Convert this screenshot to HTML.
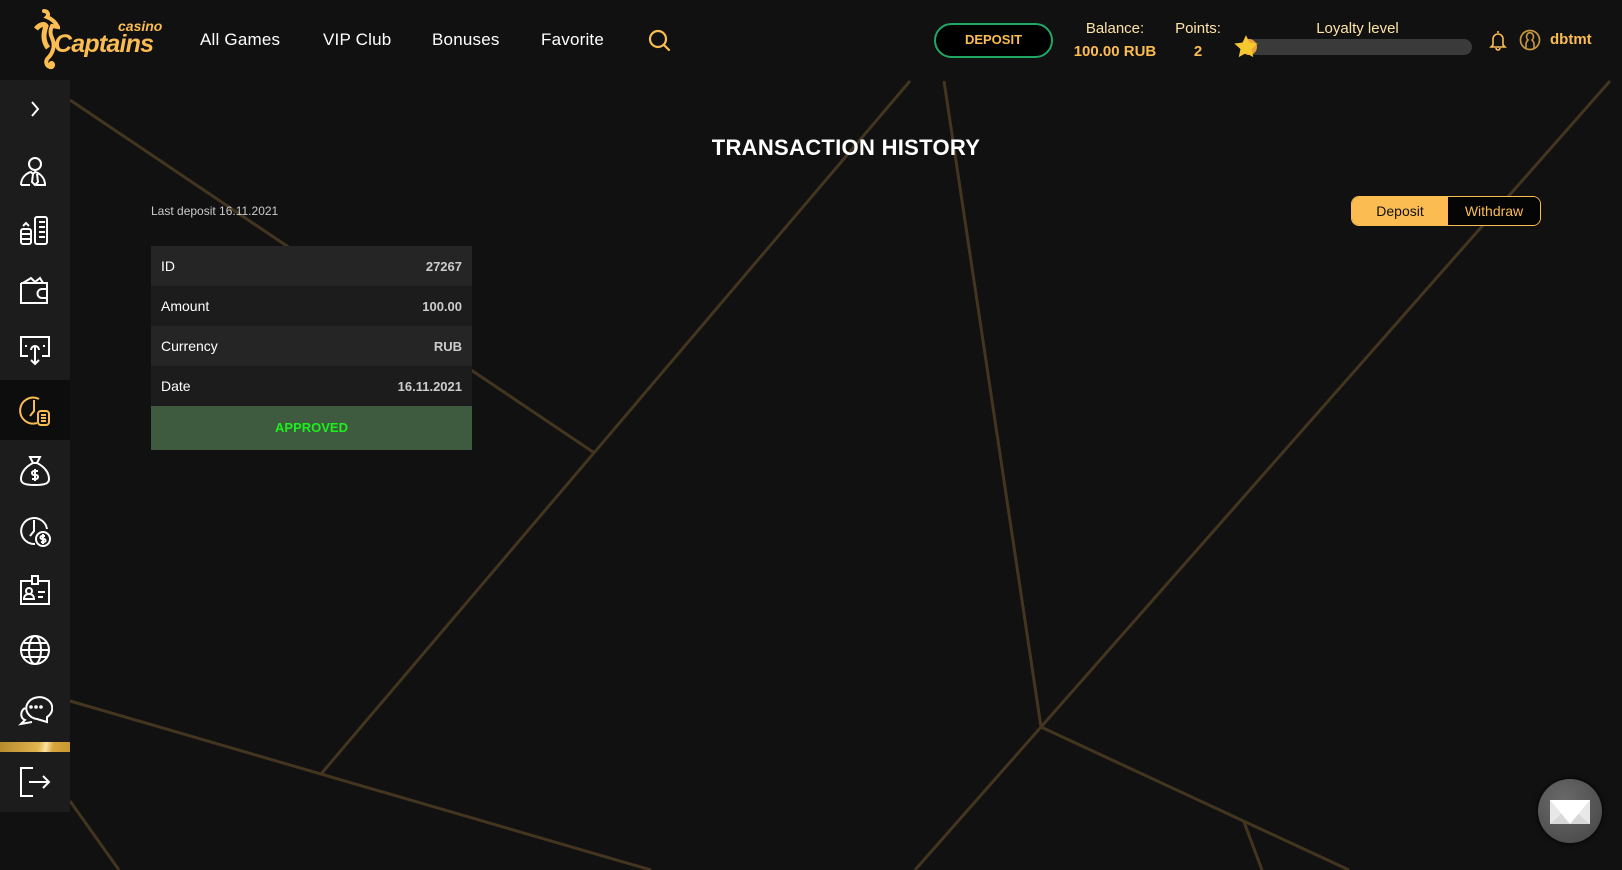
<!DOCTYPE html>
<html><head><meta charset="utf-8"><style>
*{margin:0;padding:0;box-sizing:border-box}
body{width:1622px;height:870px;background:#111;overflow:hidden;position:relative;font-family:"Liberation Sans",sans-serif;color:#fff}
.abs{position:absolute}
#bg{position:absolute;left:0;top:0}
.nav{position:absolute;top:30px;font-size:17px;color:#fff;letter-spacing:0.2px}
.gold{color:#fbbd52}
.side{position:absolute;left:0;top:80px;width:70px;height:732px;background:#1c1c1c}
.ico{position:absolute;left:17px;width:36px;height:36px}
</style></head><body>
<svg id="bg" width="1622" height="870">
<g stroke="#43351f" stroke-width="3" fill="none">
<line x1="70" y1="100" x2="593" y2="452"/>
<line x1="910" y1="81" x2="321" y2="774"/>
<line x1="70" y1="701" x2="651" y2="870"/>
<line x1="70" y1="801" x2="119" y2="870"/>
<line x1="944" y1="81" x2="1041" y2="727"/>
<polyline points="1610,81 1041,727 915,870"/>
<line x1="1041" y1="727" x2="1349" y2="870"/>
<line x1="1244" y1="822" x2="1262" y2="870"/>
</g></svg>

<div class="abs" style="left:0;top:0;width:1622px;height:80px;background:#111"></div>
<svg class="abs" style="left:30px;top:9px" width="30" height="64" viewBox="0 0 30 64">
<path d="M14 2c4 0 5 4 3 6c5 2 9 6 11 10l-6 -1c-2 4 -2 8 0 12c3 6 2 14 -4 20c-3 3 -2 8 2 9c3 1 4 -3 2 -4c-2 0 -2 2 -1 2" stroke="#fbbd52" stroke-width="4" fill="none" stroke-linecap="round"/>
<path d="M6 20c3 -4 8 -6 10 -3c-2 6 -4 14 2 22" stroke="#fbbd52" stroke-width="5" fill="none"/>
</svg>
<div class="abs gold" style="left:118px;top:18px;font-size:14px;font-style:italic;font-weight:bold">casino</div>
<div class="abs gold" style="left:54px;top:30px;font-size:25px;font-style:italic;font-weight:bold;letter-spacing:-0.8px">Captains</div>
<div class="nav" style="left:200px">All Games</div>
<div class="nav" style="left:323px">VIP Club</div>
<div class="nav" style="left:432px">Bonuses</div>
<div class="nav" style="left:541px">Favorite</div>
<svg class="abs" style="left:648px;top:29px" width="24" height="24"><circle cx="10" cy="10" r="8" stroke="#fbbd52" stroke-width="2.2" fill="none"/><line x1="16" y1="16" x2="21" y2="21" stroke="#fbbd52" stroke-width="2.2" stroke-linecap="round"/></svg>

<div class="abs" style="left:934px;top:23px;width:119px;height:35px;border:2.5px solid #21a764;border-radius:18px;background:#000;color:#fbbd52;font-weight:bold;font-size:13px;text-align:center;line-height:30px">DEPOSIT</div>
<div class="abs" style="left:1060px;top:20px;width:110px;text-align:center;font-size:15px;color:#fde3a8">Balance:</div>
<div class="abs gold" style="left:1060px;top:43px;width:110px;text-align:center;font-size:15px;font-weight:bold">100.00 RUB</div>
<div class="abs" style="left:1168px;top:20px;width:60px;text-align:center;font-size:15px;color:#fde3a8">Points:</div>
<div class="abs gold" style="left:1168px;top:43px;width:60px;text-align:center;font-size:15px;font-weight:bold">2</div>
<div class="abs" style="left:1280px;top:20px;width:155px;text-align:center;font-size:15px;color:#fde3a8">Loyalty level</div>
<div class="abs" style="left:1241px;top:39px;width:231px;height:16px;border-radius:8px;background:#3a3a3a"></div>
<div class="abs" style="left:1241px;top:39px;width:16px;height:16px;border-radius:8px;background:#e8a23a"></div>
<svg class="abs" style="left:1233px;top:34px" width="26" height="26" viewBox="0 0 24 24"><path d="M12 1l3.2 7 7.6.8-5.7 5.1 1.6 7.5L12 17.6 5.3 21.4l1.6-7.5L1.2 8.8l7.6-.8z" fill="#f7c82e"/></svg>
<svg class="abs" style="left:1488px;top:29px" width="20" height="22" viewBox="0 0 20 22"><path d="M10 2v2M5 16V10a5 5 0 0 1 10 0v6l2 2H3z M8 19a2 2 0 0 0 4 0" stroke="#fbbd52" stroke-width="1.6" fill="none"/></svg>
<svg class="abs" style="left:1519px;top:29px" width="22" height="22" viewBox="0 0 22 22"><circle cx="11" cy="11" r="9.5" stroke="#c9953f" stroke-width="1.7" fill="none"/><path d="M7 19v-4c0-2 1-3 2-4a3.5 4 0 1 1 4 0c1 1 2 2 2 4v4" stroke="#c9953f" stroke-width="1.6" fill="none"/></svg>
<div class="abs gold" style="left:1550px;top:31px;font-size:15px;font-weight:bold">dbtmt</div>

<div class="side">
<svg class="ico" style="top:12px" viewBox="0 0 36 36"><path d="M15 10l6 7-6 7" stroke="#fff" stroke-width="2" fill="none"/></svg>
<svg class="ico" style="top:73px" viewBox="0 0 36 36" fill="none" stroke="#fff" stroke-width="2"><circle cx="18" cy="11" r="6"/><path d="M4 32c0-8 6-12 10-13l2 2 2-2c4 1 10 5 10 13h-9M13 32H4M16 21l-1 8 3 3 3-3-1-8"/></svg>
<div class="abs" style="left:0;top:300px;width:70px;height:60px;background:#0d0d0d"></div>
<svg class="ico" style="top:133px" viewBox="0 0 36 36" fill="none" stroke="#fff" stroke-width="2"><rect x="4" y="16" width="10" height="15" rx="2"/><path d="M5 21h8M5 26h8M6 13l3-3 3 3"/><rect x="18" y="4" width="12" height="27" rx="2"/><path d="M22 9h6M22 14h6M22 19h6M22 24h6"/></svg>
<svg class="ico" style="top:193px" viewBox="0 0 36 36" fill="none" stroke="#fff" stroke-width="2"><path d="M4 10h26v6M4 10v20h26v-5M6 10l8-5 4 4 5-4 3 5"/><path d="M30 16h-5a4 4 0 0 0 0 9h5z"/></svg>
<svg class="ico" style="top:252px" viewBox="0 0 36 36" fill="none" stroke="#fff" stroke-width="2"><path d="M11 24H4V5h28v19h-7"/><path d="M14 18a4 4 0 1 1 8 0M18 14v18M14 28l4 4 4-4M8 14h2M26 14h2"/></svg>
<svg class="ico" style="top:313px" viewBox="0 0 36 36" fill="none" stroke="#fbbd52" stroke-width="2"><path d="M22 6A13 13 0 1 0 20 30"/><path d="M17 7v11l-4 5"/><rect x="21" y="18" width="11" height="14" rx="3"/><path d="M24 22h5M24 25h5M24 28h5"/></svg>
<svg class="ico" style="top:373px" viewBox="0 0 36 36" fill="none" stroke="#fff" stroke-width="2"><path d="M13 4h10l-3 6h-4zM16 10C8 14 4 20 4 26c0 4 3 6 14 6s14-2 14-6c0-6-4-12-12-16"/><path d="M21 18h-4a2 2 0 0 0 0 4h2a2 2 0 0 1 0 4h-4M18 16v12"/></svg>
<svg class="ico" style="top:433px" viewBox="0 0 36 36" fill="none" stroke="#fff" stroke-width="2"><path d="M30 16A13 13 0 1 0 18 31"/><path d="M17 7v11l-4 5"/><circle cx="26" cy="26" r="7"/><path d="M28 23h-3a1.5 1.5 0 0 0 0 3h2a1.5 1.5 0 0 1 0 3h-3M26 21v10"/></svg>
<svg class="ico" style="top:492px" viewBox="0 0 36 36" fill="none" stroke="#fff" stroke-width="2"><path d="M14 9H4v23h28V9H22"/><rect x="15" y="4" width="6" height="8"/><circle cx="12" cy="19" r="3"/><path d="M7 27c0-3 2-5 5-5s5 2 5 5zM21 20h7M21 25h5"/></svg>
<svg class="ico" style="top:552px" viewBox="0 0 36 36" fill="none" stroke="#fff" stroke-width="2"><circle cx="18" cy="18" r="14"/><ellipse cx="18" cy="18" rx="6" ry="14"/><path d="M4 18h28M6 11h24M6 25h24"/></svg>
<svg class="ico" style="top:611px" viewBox="0 0 36 36" fill="none" stroke="#fff" stroke-width="2"><path d="M30 26A13 11 0 1 0 20 28l10 3zM8 17C3 20 3 27 8 29l-4 4 11-2"/><circle cx="14" cy="16" r="0.8" fill="#fff"/><circle cx="19" cy="16" r="0.8" fill="#fff"/><circle cx="24" cy="16" r="0.8" fill="#fff"/></svg>
<div class="abs" style="left:0;top:662px;width:70px;height:10px;background:linear-gradient(100deg,#b58a2c 0%,#e2b450 55%,#fbe3a0 65%,#d9a43d 75%,#c8962f 100%)"></div>
<svg class="ico" style="top:684px" viewBox="0 0 36 36" fill="none" stroke="#fff" stroke-width="2"><path d="M16 4H4v28h12M12 18h20M26 12l6 6-6 6"/></svg>
</div>

<div class="abs" style="left:0;top:135px;width:1692px;text-align:center;font-size:22px;font-weight:bold;letter-spacing:0.3px">TRANSACTION HISTORY</div>
<div class="abs" style="left:151px;top:204px;font-size:12px;color:#ccc">Last deposit 16.11.2021</div>

<div class="abs" style="left:151px;top:246px;width:321px;font-size:14px">
<div style="height:40px;background:#252525;display:flex;justify-content:space-between;align-items:center;padding:0 10px"><span>ID</span><span style="color:#ccc;font-weight:bold;font-size:13px">27267</span></div>
<div style="height:40px;background:#1c1c1c;display:flex;justify-content:space-between;align-items:center;padding:0 10px"><span>Amount</span><span style="color:#ccc;font-weight:bold;font-size:13px">100.00</span></div>
<div style="height:40px;background:#252525;display:flex;justify-content:space-between;align-items:center;padding:0 10px"><span>Currency</span><span style="color:#ccc;font-weight:bold;font-size:13px">RUB</span></div>
<div style="height:40px;background:#1c1c1c;display:flex;justify-content:space-between;align-items:center;padding:0 10px"><span>Date</span><span style="color:#ccc;font-weight:bold;font-size:13px">16.11.2021</span></div>
<div style="height:44px;background:#3e5b3f;text-align:center;line-height:44px;color:#1cf01c;font-weight:bold;font-size:13px">APPROVED</div>
</div>

<div class="abs" style="left:1351px;top:196px;width:190px;height:30px;border:1px solid #fbbd52;border-radius:8px;overflow:hidden;display:flex;font-size:14px">
<div style="width:96px;background:#fbbd52;color:#111;text-align:center;line-height:28px">Deposit</div>
<div style="flex:1;background:#050505;color:#fbbd52;text-align:center;line-height:28px">Withdraw</div>
</div>

<div class="abs" style="left:1538px;top:779px;width:64px;height:64px;border-radius:50%;background:radial-gradient(circle at 40% 35%,#6a6a6a,#444);box-shadow:0 0 6px #000"></div>
<svg class="abs" style="left:1550px;top:800px" width="40" height="24" viewBox="0 0 40 24"><rect width="40" height="24" fill="#e8e8e8"/><path d="M0 24L16 10h8l16 14z" fill="#d8d8d8"/><path d="M0 0l20 24L40 0z" fill="#fff"/></svg>
</body></html>
